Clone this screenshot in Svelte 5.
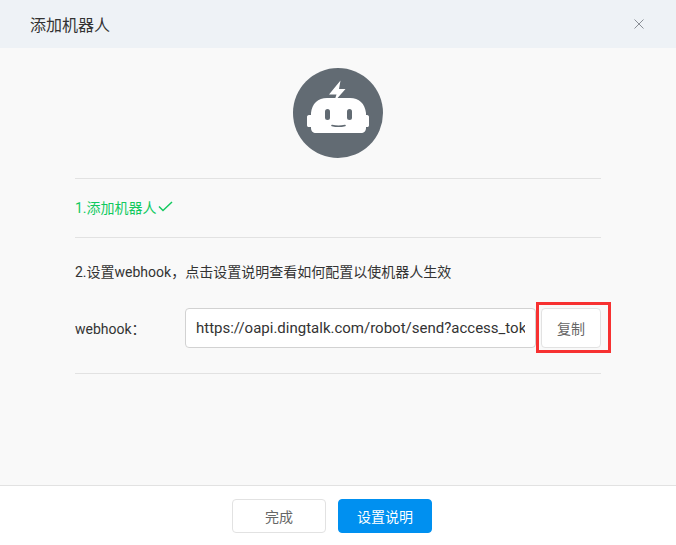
<script>
  const url = 'https://oapi.dingtalk.com/robot/send?access_token=5f3c9a1e7b2d4860';
</script>

<div class="dialog">
  <header class="head">
    <h2>添加机器人</h2>
    <svg class="close" width="10" height="10" viewBox="0 0 10 10"><path d="M.5.5l9 9M9.500.5l-9 9" stroke="#8a8f96" fill="none" /></svg>
  </header>

  <main class="body">
    <div class="avatar">
      <svg width="90" height="90" viewBox="0 0 90 90">
        <circle cx="45" cy="45" r="45" fill="#626b73" />
        <path d="M47.500 12.500L36 26.500h7.500L41 34l11.500-13h-6.500z" fill="#fff" />
        <path d="M34 30h23c9 0 15 5.500 16 15v2h1c1.500 0 2 1 2 2v8c0 1.500-.5 2-2 2h-1v1c0 3-2 5-5 5H23c-3 0-5-2-5-5v-1h-2c-1.500 0-2-.5-2-2v-8c0-1 .5-2 2-2h2v-2c1-9.500 7-15 16-15z" fill="#fff" />
        <rect x="32" y="41" width="5" height="11" rx="2.500" fill="#626b73" />
        <rect x="54" y="41" width="5" height="11" rx="2.500" fill="#626b73" />
        <path d="M39 57.500c4 1 9 1 13 0" stroke="#626b73" stroke-width="1.600" stroke-linecap="round" fill="none" />
      </svg>
    </div>

    <div class="step done">
      1.添加机器人
      <svg width="15" height="11" viewBox="0 0 15 11"><path d="M1 5.500l4 4 9-8.500" stroke="#12c95f" stroke-width="1.500" fill="none" /></svg>
    </div>

    <div class="setup">
      <p>2.设置webhook，点击设置说明查看如何配置以使机器人生效</p>
      <div class="row">
        <span class="label">webhook：</span>
        <input class="url" value={url} readonly />
        <div class="copy-wrap">
          <button class="btn copy">复制</button>
          <span class="mark"></span>
        </div>
      </div>
    </div>
  </main>

  <footer class="foot">
    <button class="btn done-btn">完成</button>
    <button class="btn primary">设置说明</button>
  </footer>
</div>

<style>
  :global(body) {
    margin: 0;
    background: #fff;
  }
  .dialog {
    width: 676px;
    height: 545px;
    display: flex;
    flex-direction: column;
    font-family: Roboto, "Noto Sans CJK SC", sans-serif;
    font-size: 14px;
    color: #333;
  }
  .head {
    height: 48px;
    flex: none;
    background: #eef2f6;
    display: flex;
    align-items: center;
    justify-content: space-between;
    padding: 0 32px 0 30px;
  }
  .head h2 {
    margin: 3px 0 0;
    font-size: 16px;
    line-height: 24px;
    font-weight: 400;
    color: #333;
  }
  .body {
    flex: 1;
    background: #f9f9f9;
    padding: 20px 75px 0;
  }
  .avatar {
    height: 90px;
    display: flex;
    justify-content: center;
    padding-bottom: 20px;
    border-bottom: 1px solid #e2e2e2;
  }
  .step {
    padding-bottom: 3px;
    height: 55px;
    display: flex;
    align-items: center;
    gap: 1px;
    border-bottom: 1px solid #e2e2e2;
  }
  .done {
    color: #12c95f;
  }
  .setup {
    border-bottom: 1px solid #e2e2e2;
    padding: 24px 0 25px;
  }
  .setup p {
    margin: 0 0 26px;
    line-height: 20px;
  }
  .row {
    display: flex;
    align-items: center;
    gap: 5px;
  }
  .label {
    width: 105px;
    flex: none;
  }
  .url {
    flex: 1;
    min-width: 0;
    height: 40px;
    box-sizing: border-box;
    padding: 0 10px;
    border: 1px solid #d2d2d2;
    border-radius: 4px;
    background: #fff;
    font: inherit;
    font-size: 15px;
    color: #333;
    outline: none;
  }
  .btn {
    box-sizing: border-box;
    border: 1px solid #e2e2e2;
    border-radius: 4px;
    background: #fff;
    color: #666;
    font: inherit;
    padding: 0;
  }
  .copy-wrap {
    position: relative;
    flex: none;
    display: flex;
  }
  .copy {
    width: 60px;
    height: 40px;
  }
  .mark {
    position: absolute;
    left: -5px;
    top: -6px;
    width: 75px;
    height: 51px;
    box-sizing: border-box;
    border: 3px solid #f73131;
  }
  .foot {
    height: 60px;
    flex: none;
    box-sizing: border-box;
    border-top: 1px solid #e2e2e2;
    background: #fff;
    display: flex;
    justify-content: center;
    align-items: center;
    gap: 12px;
    padding-right: 12px;
  }
  .foot .btn {
    width: 94px;
    height: 34px;
  }
  .primary {
    background: #0090f0;
    border-color: #0090f0;
    color: #fff;
  }
</style>
